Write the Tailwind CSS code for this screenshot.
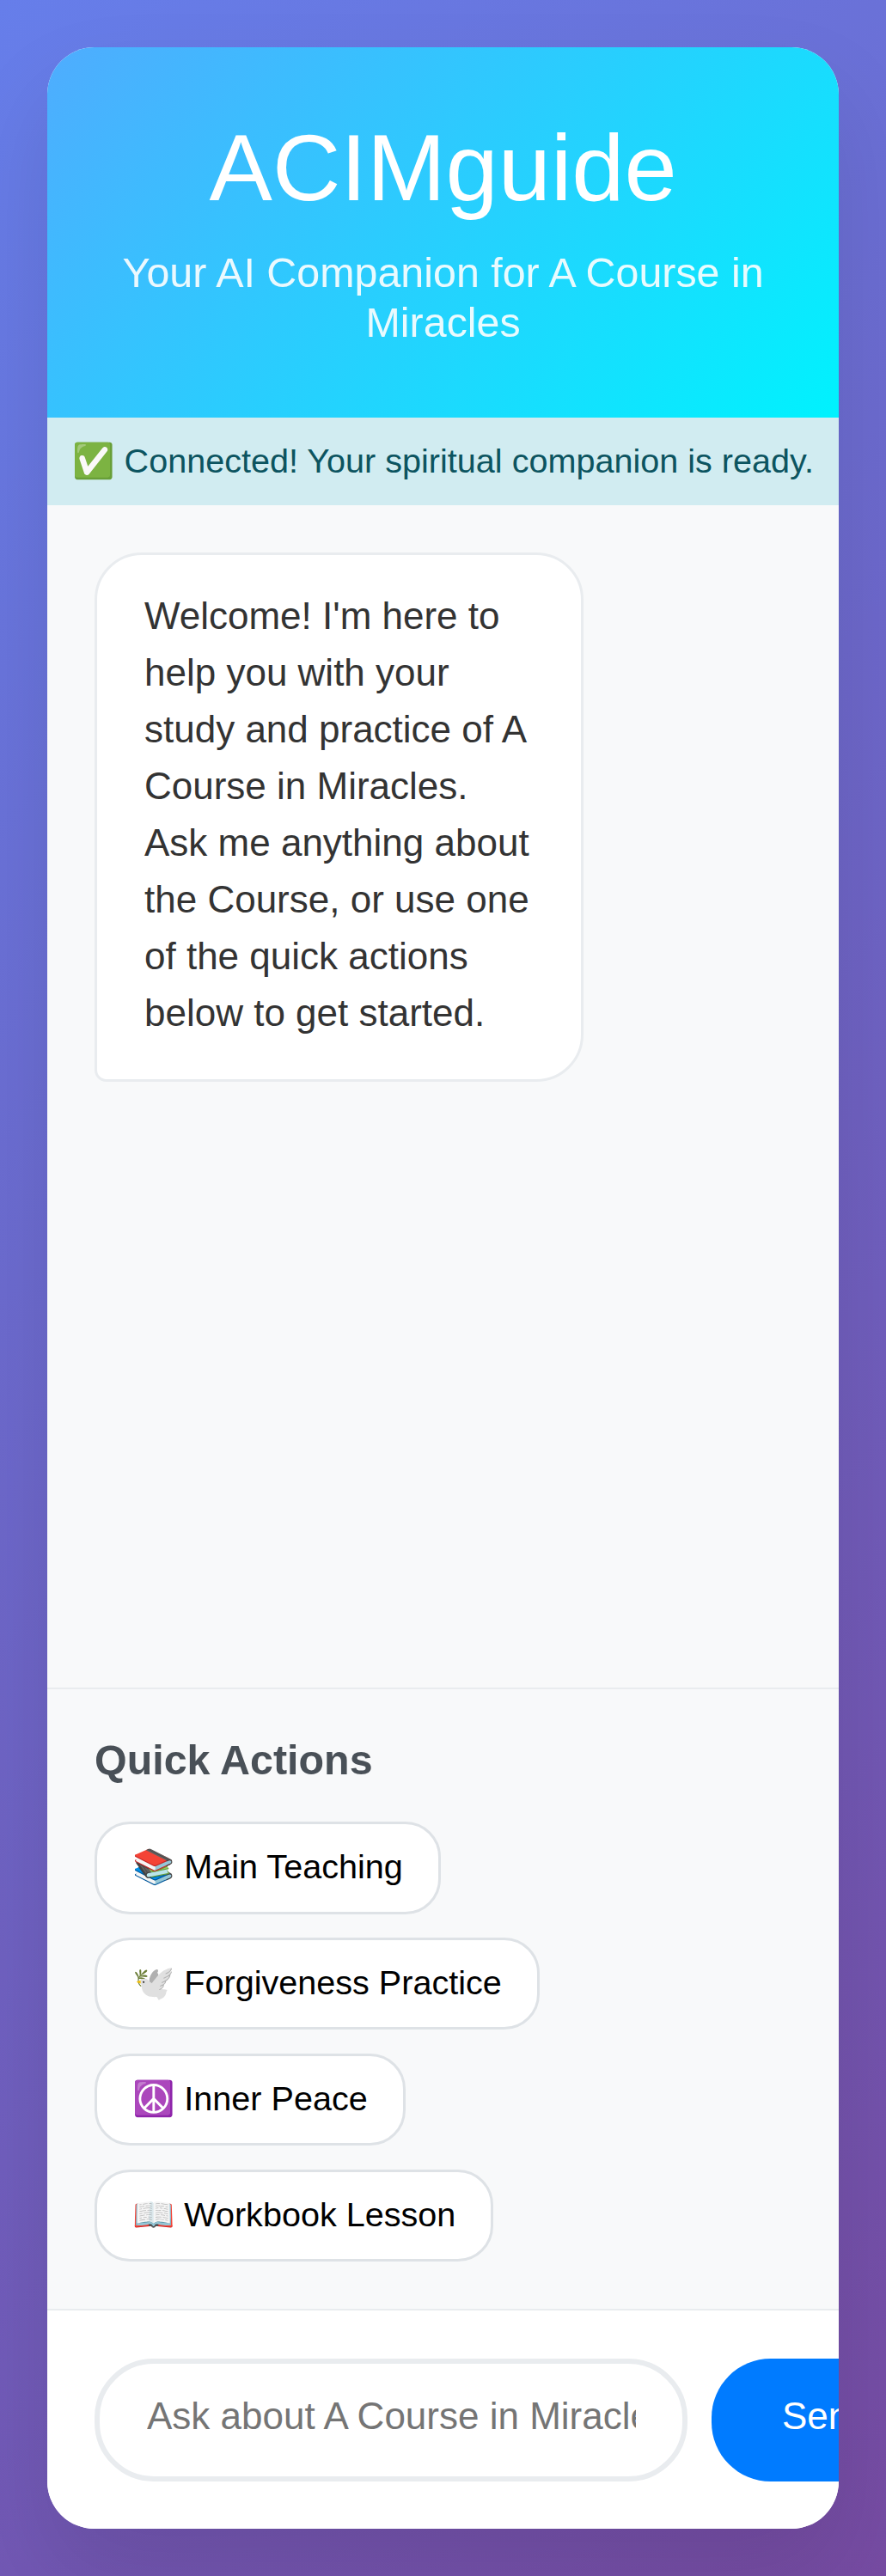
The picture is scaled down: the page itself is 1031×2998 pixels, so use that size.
<!DOCTYPE html>
<html lang="en">
<head>
<meta charset="utf-8">
<title>ACIMguide</title>
<script src="https://cdn.jsdelivr.net/npm/@tailwindcss/browser@4"></script>
</head>
<body class="bg-white font-['Liberation_Sans','Noto_Color_Emoji',sans-serif]">
<div class="h-[2997.5px] overflow-hidden bg-[linear-gradient(135deg,#667eea_0%,#764ba2_100%)] p-[55px]">
  <main class="flex h-[2887.5px] w-[921.25px] flex-col overflow-hidden rounded-[55px] bg-white shadow-[0_55px_110px_rgba(0,0,0,0.1)]">
    <header class="h-[431.25px] shrink-0 bg-[linear-gradient(135deg,#4facfe_0%,#00f2fe_100%)] p-[82.5px] text-center text-white">
      <h1 class="mb-[36px] text-[110px] leading-[114px] font-light">ACIMguide</h1>
      <p class="text-[48.4px] leading-[58px] opacity-90">Your AI Companion for A Course in Miracles</p>
    </header>
    <div class="h-[101.75px] shrink-0 bg-[#d1ecf1] pt-[26.5px] text-center text-[39.6px] leading-[46px] whitespace-nowrap text-[#0c5460]">✅ Connected! Your spiritual companion is ready.</div>
    <section class="min-h-0 flex-1 bg-[#f8f9fa] p-[55px]">
      <div class="h-[615.5px] w-[569px] rounded-[55px] rounded-bl-[13.75px] border-3 border-[#e9ecef] bg-white pt-[38.25px] pr-[54px] pl-[55px] text-[44px] leading-[66px] text-[#333]">Welcome! I'm here to help you with your study and practice of A Course in Miracles. Ask me anything about the Course, or use one of the quick actions below to get started.</div>
    </section>
    <section class="h-[723px] shrink-0 border-t-2 border-[#e9ecef] bg-[#f8f9fa] px-[55px] pt-[55.75px]">
      <h3 class="mb-[45.5px] text-[48.4px] leading-[53px] font-bold text-[#495057]">Quick Actions</h3>
      <div class="flex flex-col items-start gap-[27.5px] text-[39.6px] leading-[46px] text-black">
        <button class="h-[107.25px] rounded-[41.25px] border-3 border-[#dee2e6] bg-white px-[41px] pb-[3px]">📚 Main Teaching</button>
        <button class="h-[107.25px] rounded-[41.25px] border-3 border-[#dee2e6] bg-white px-[41px] pb-[3px]">🕊️ Forgiveness Practice</button>
        <button class="h-[107.25px] rounded-[41.25px] border-3 border-[#dee2e6] bg-white px-[41px] pb-[3px]">☮️ Inner Peace</button>
        <button class="h-[107.25px] rounded-[41.25px] border-3 border-[#dee2e6] bg-white px-[41px] pb-[3px]">📖 Workbook Lesson</button>
      </div>
    </section>
    <form class="flex shrink-0 gap-[27.5px] border-t-2 border-[#e9ecef] bg-white px-[55px] pt-[55.5px] pb-[55px]">
      <input type="text" placeholder="Ask about A Course in Miracles..." class="h-[143px] w-[690px] shrink-0 rounded-[68.75px] border-6 border-[#e9ecef] pr-[54px] pb-[8px] pl-[55px] text-[44px] placeholder:text-[#757575]">
      <button type="button" class="h-[143px] shrink-0 rounded-[68.75px] bg-[#007bff] px-[82.5px] pb-[8px] text-[44px] text-white">Send</button>
    </form>
  </main>
</div>
</body>
</html>
